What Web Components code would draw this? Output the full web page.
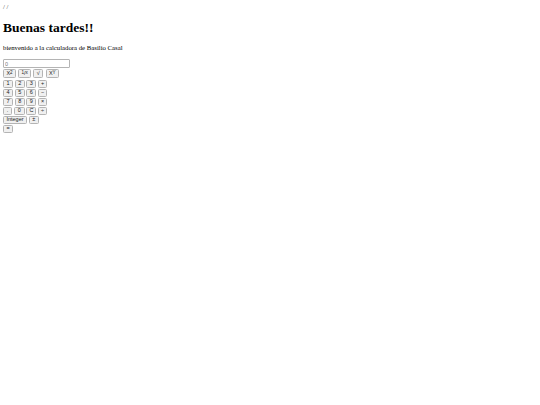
<!DOCTYPE html>
<html><head><meta charset="utf-8"><style>
html,body{margin:0;background:#fff}
body{padding:3px;font-family:"Liberation Serif",serif;color:#000}
</style></head><body>
<calc-app></calc-app>
<script>
class CalcKey extends HTMLElement{
  constructor(){super();const s=this.attachShadow({mode:'open'});
  s.innerHTML=`<style>
  :host{display:inline-flex;flex:none}
  button{box-sizing:border-box;height:8.5px;width:var(--w,10px);padding:0;margin:0;border:1px solid #b4b4b4;border-radius:1.5px;background:#f0f0f0;color:#222;font:5.5px/1 "Liberation Sans",sans-serif;display:flex;align-items:center;justify-content:center}
  sup,sub{font-size:3.6px;line-height:0}
  </style><button><slot></slot></button>`;}
}
customElements.define('calc-key',CalcKey);
class KeyRow extends HTMLElement{
  constructor(){super();this.attachShadow({mode:'open'}).innerHTML=`<style>:host{display:flex;gap:1.7px;height:9px}</style><slot></slot>`;}
}
customElements.define('key-row',KeyRow);
class CalcApp extends HTMLElement{
  constructor(){super();this.attachShadow({mode:'open'}).innerHTML=`<style>
  :host{display:block}
  .crumb{font-size:6.75px;line-height:8px;color:#444;height:8px}
  h1{font:bold 13.5px/16px "Liberation Serif",serif;margin:9px 0 0}
  p{font-size:6.75px;line-height:8px;margin:8px 0 0}
  input{display:block;box-sizing:border-box;width:67px;height:9px;margin:7px 0 1px;padding:0 1px;border:1px solid #b4b4b4;border-radius:1px;font:5.5px "Liberation Sans",sans-serif;background:#fff}
  input::placeholder{color:#777}
  .keys{display:flex;flex-direction:column}
  .first{height:10.5px;gap:2.2px}
  </style>
  <div class="crumb">/ /</div>
  <h1>Buenas tardes!!</h1>
  <p>bienvenido a la calculadora de Basilio Casal</p>
  <input placeholder="0" aria-label="valor">
  <div class="keys">
    <key-row class="first"><calc-key style="--w:13px">X<sup>2</sup></calc-key><calc-key style="--w:13px"><sup>1</sup>/<sub>x</sub></calc-key><calc-key>√</calc-key><calc-key style="--w:13.5px">X<sup>Y</sup></calc-key></key-row>
    <key-row><calc-key>1</calc-key><calc-key>2</calc-key><calc-key>3</calc-key><calc-key style="--w:9px">+</calc-key></key-row>
    <key-row><calc-key>4</calc-key><calc-key>5</calc-key><calc-key>6</calc-key><calc-key style="--w:9px">−</calc-key></key-row>
    <key-row><calc-key>7</calc-key><calc-key>8</calc-key><calc-key>9</calc-key><calc-key style="--w:9px">×</calc-key></key-row>
    <key-row><calc-key style="--w:9px">.</calc-key><calc-key style="--w:11px">0</calc-key><calc-key>C</calc-key><calc-key style="--w:9px">÷</calc-key></key-row>
    <key-row><calc-key style="--w:24px">Integer</calc-key><calc-key style="--w:10px">±</calc-key></key-row>
    <key-row><calc-key>=</calc-key></key-row>
  </div>`;}
}
customElements.define('calc-app',CalcApp);
</script>
</body></html>
